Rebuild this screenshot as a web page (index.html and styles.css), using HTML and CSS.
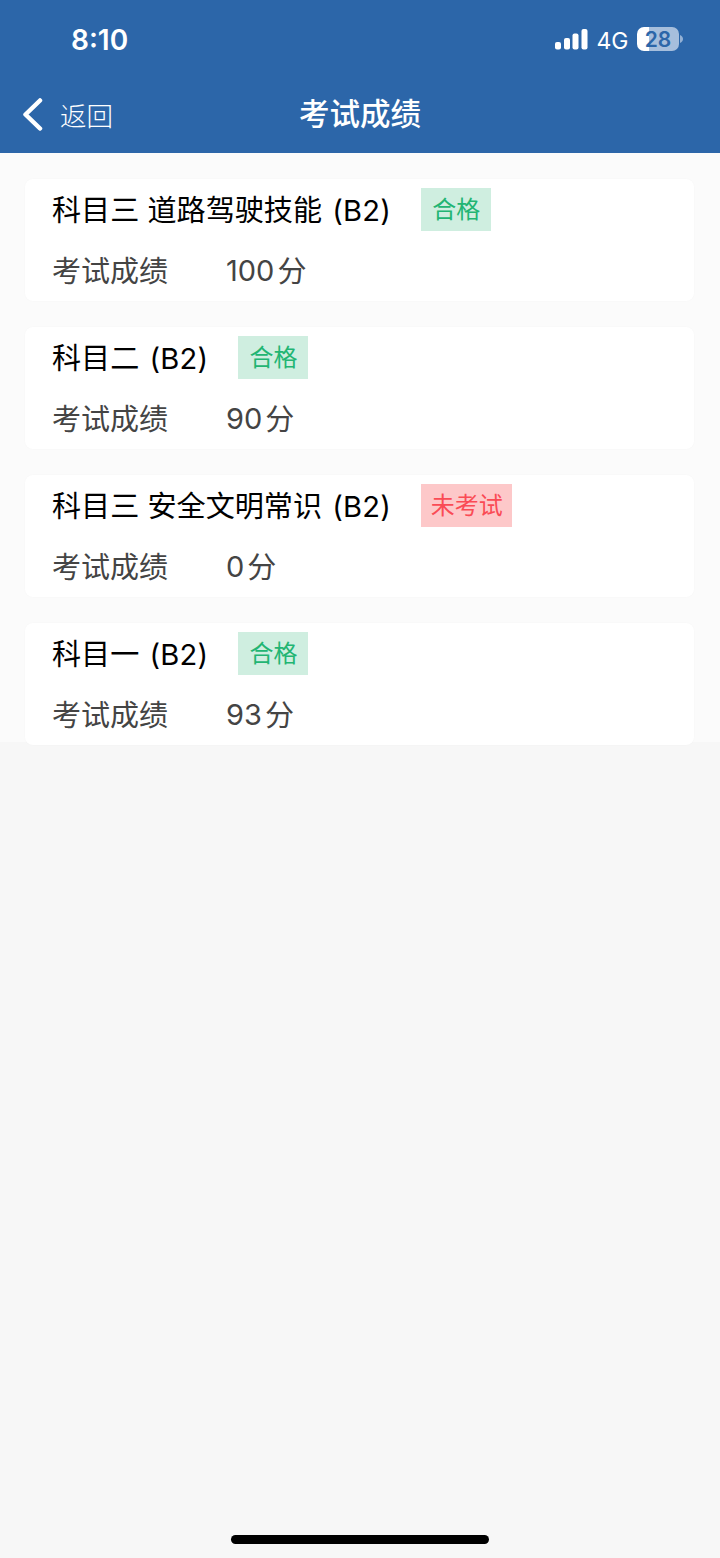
FILE: index.html
```html
<!DOCTYPE html>
<html lang="zh-CN">
<head>
  <meta charset="UTF-8" />
  <meta name="viewport" content="width=device-width, initial-scale=1.0" />
  <title>考试成绩</title>
  <link rel="stylesheet" href="styles.css">
</head>
<body>
  <header class="header">
    <!-- 状态栏 -->
    <div class="status-bar">
      <span class="time">8:10</span>
      <div class="status-icons">
        <svg class="signal" width="33" height="22" viewBox="0 0 33 22" fill="#fff">
          <rect x="0" y="14" width="6" height="7.500" rx="2" />
          <rect x="9" y="10" width="6" height="11.500" rx="2" />
          <rect x="17.500" y="5.500" width="6" height="16" rx="2" />
          <rect x="26.500" y="1" width="6" height="20.500" rx="2" />
        </svg>
        <span class="network">4G</span>
        <div class="battery"><span class="battery-level">28</span></div>
        <svg class="battery-cap" width="3" height="8" viewBox="0 0 3 8">
          <path d="M0 0C4 1.500 4 6.500 0 8Z" fill="#94b1d5" />
        </svg>
      </div>
    </div>

    <!-- 导航栏 -->
    <nav class="nav-bar">
      <a class="back" href="#">
        <svg width="22" height="36" viewBox="0 0 22 36" fill="none" stroke="#fff" stroke-width="4.500" stroke-linecap="round" stroke-linejoin="round">
          <path d="M19 2.500L4.500 16.500L19 30.500" />
        </svg>
        <span>返回</span>
      </a>
      <h1>考试成绩</h1>
    </nav>
  </header>

  <!-- 成绩列表 -->
  <main class="list">
    <section class="card">
      <div class="card-title">
        <h2>科目三 道路驾驶技能 <span class="type">(B2)</span></h2>
        <span class="tag pass">合格</span>
      </div>
      <div class="score"><span class="label">考试成绩</span><span class="num">100</span><span class="unit">分</span></div>
    </section>

    <section class="card">
      <div class="card-title">
        <h2>科目二 <span class="type">(B2)</span></h2>
        <span class="tag pass">合格</span>
      </div>
      <div class="score"><span class="label">考试成绩</span><span class="num">90</span><span class="unit">分</span></div>
    </section>

    <section class="card">
      <div class="card-title">
        <h2>科目三 安全文明常识 <span class="type">(B2)</span></h2>
        <span class="tag pending">未考试</span>
      </div>
      <div class="score"><span class="label">考试成绩</span><span class="num">0</span><span class="unit">分</span></div>
    </section>

    <section class="card">
      <div class="card-title">
        <h2>科目一 <span class="type">(B2)</span></h2>
        <span class="tag pass">合格</span>
      </div>
      <div class="score"><span class="label">考试成绩</span><span class="num">93</span><span class="unit">分</span></div>
    </section>
  </main>

  <footer class="footer">
    <div class="home-indicator"></div>
  </footer>
</body>
</html>
```

FILE: styles.css
```css
:root {
  --blue: #2c66a9;
  --bg-page: #f7f7f7;
  --bg-list: #fbfbfb;
  --green: #22b573;
  --red: #fa4b55;
}

* {
  box-sizing: border-box;
}
body {
  margin: 0;
  height: 1558px;
  display: flex;
  flex-direction: column;
  background-color: var(--bg-page);
  font-family: Inter, "Noto Sans CJK SC", sans-serif;
  color: #000;
}

/* 顶部 */
.header {
  height: 153px;
  background-color: var(--blue);
  color: #fff;
}
.status-bar {
  height: 78px;
  padding: 0 37px 0 71px;
  display: flex;
  align-items: center;
  justify-content: space-between;
}
.time {
  padding-top: 2px;
  font-size: 28px;
  font-weight: 600;
}
.status-icons {
  display: flex;
  align-items: center;
}
.network {
  margin: 3px 9px 0 9px;
  font-size: 23px;
  letter-spacing: -0.3px;
}
.battery {
  width: 42px;
  height: 24px;
  border-radius: 7px;
  background: linear-gradient(to right, #fff 12px, #a6bedc 12px);
  color: var(--blue);
  text-align: center;
}
.battery-level {
  display: block;
  font-size: 21px;
  font-weight: 600;
  line-height: 25px;
}
.battery-cap {
  margin-left: 1px;
}

/* 导航栏 */
.nav-bar {
  height: 75px;
  display: grid;
  grid-template-columns: 1fr auto 1fr;
  align-items: center;
}
.back {
  display: flex;
  align-items: center;
  gap: 17px;
  padding-left: 21px;
  color: #fff;
  font-size: 26.5px;
  font-weight: 300;
  line-height: 40px;
  text-decoration: none;
}
.nav-bar h1 {
  margin: 0 0 3px;
  font-size: 30.5px;
  font-weight: 500;
  line-height: 40px;
}

/* 成绩列表 */
.list {
  height: 589px;
  padding: 26px 26px 0 25px;
  display: flex;
  flex-direction: column;
  gap: 26px;
  background-color: var(--bg-list);
}
.card {
  flex: 0 0 122px;
  padding: 9px 27px 0;
  border-radius: 8px;
  background-color: #fff;
  box-shadow: 0 0 2px rgba(0, 0, 0, 0.03);
}
.card-title {
  display: flex;
  align-items: center;
  gap: 30px;
}
.card-title h2 {
  margin: 0;
  font-size: 29.1px;
  font-weight: 400;
  line-height: 45px;
  height: 43px;
  white-space: nowrap;
}
.type {
  margin-left: 2px;
  letter-spacing: 0.25px;
}
.tag {
  padding: 0 11px;
  font-size: 24px;
  line-height: 43px;
}
.pass {
  background-color: #cfeee0;
  color: var(--green);
}
.pending {
  padding: 0 9.5px;
  background-color: #fdc8c9;
  color: var(--red);
}
.score {
  margin-top: 18px;
  display: flex;
  color: #444;
  font-size: 29px;
  line-height: 45px;
}
.label {
  width: 174px;
}
.num {
  line-height: 43px;
}
.unit {
  margin-left: 3px;
}

/* 底部横条 */
.footer {
  margin-top: auto;
  padding-bottom: 14px;
  display: flex;
  justify-content: center;
}
.home-indicator {
  width: 258px;
  height: 9px;
  border-radius: 5px;
  background-color: #000;
}
```
